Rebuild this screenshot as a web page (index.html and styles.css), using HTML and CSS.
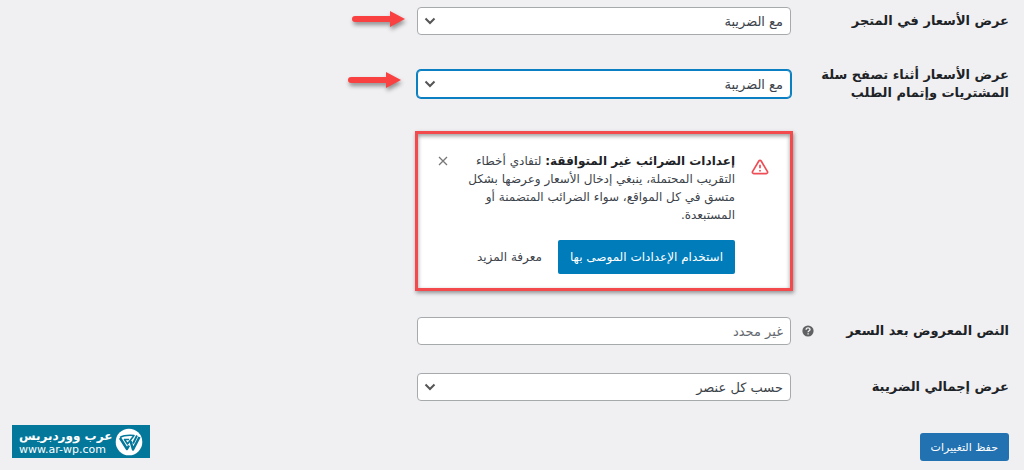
FILE: index.html
```html
<!DOCTYPE html>
<html lang="ar" dir="rtl">
<head>
    <meta charset="UTF-8">
    <meta name="viewport" content="width=device-width, initial-scale=1.0">
    <title>خيارات الضريبة</title>
    <link rel="stylesheet" href="styles.css">
</head>
<body>
    <form class="settings">
        <div class="row">
            <label class="row-label" for="display-shop">عرض الأسعار في المتجر</label>
            <select id="display-shop" class="field select">
                <option>مع الضريبة</option>
                <option>بدون الضريبة</option>
            </select>
            <svg class="arrow" width="56" height="22" viewBox="0 0 56 22" aria-hidden="true">
                <path d="M4 6H39V1L54 9L39 17V12H4A3 3 0 0 1 4 6Z" fill="#f94141"/>
            </svg>
        </div>

        <div class="row row-tall">
            <label class="row-label" for="display-cart">عرض الأسعار أثناء تصفح سلة المشتريات وإتمام الطلب</label>
            <select id="display-cart" class="field select field-focused">
                <option>مع الضريبة</option>
                <option>بدون الضريبة</option>
            </select>
            <svg class="arrow arrow-far" width="56" height="22" viewBox="0 0 56 22" aria-hidden="true">
                <path d="M4 6H39V1L54 9L39 17V12H4A3 3 0 0 1 4 6Z" fill="#f94141"/>
            </svg>
        </div>

        <div class="row">
            <div class="notice">
                <svg class="notice-icon" width="18" height="16" viewBox="0 0 20 18" aria-hidden="true">
                    <path d="M8.700 2.200L1.600 14.200A1.500 1.500 0 0 0 2.900 16.400H17.100A1.500 1.500 0 0 0 18.400 14.200L11.300 2.200A1.500 1.500 0 0 0 8.700 2.200Z" fill="none" stroke="#ee4d56" stroke-width="1.900" stroke-linejoin="round"/>
                    <path d="M10 6.500V10.500M10 12.300V14" stroke="#ee4d56" stroke-width="1.900"/>
                </svg>
                <div class="notice-body">
                    <p class="notice-text"><strong>إعدادات الضرائب غير المتوافقة:</strong> لتفادي أخطاء التقريب المحتملة، ينبغي إدخال الأسعار وعرضها بشكل متسق في كل المواقع، سواء الضرائب المتضمنة أو المستبعدة.</p>
                    <div class="notice-actions">
                        <button type="button" class="button-recommended">استخدام الإعدادات الموصى بها</button>
                        <a class="more" href="#more">معرفة المزيد</a>
                    </div>
                </div>
                <button type="button" class="close" aria-label="إغلاق">
                    <svg width="10" height="10" viewBox="0 0 10 10" aria-hidden="true">
                        <path d="M1 1L9 9M9 1L1 9" stroke="#777" stroke-width="1.300"/>
                    </svg>
                </button>
            </div>
        </div>

        <div class="row">
            <label class="row-label" for="price-suffix">النص المعروض بعد السعر</label>
            <svg class="help" width="12" height="12" viewBox="0 0 12 12" aria-hidden="true">
                <circle cx="6" cy="6" r="5.600" fill="#606163"/>
                <path d="M4.100 4.700C4.100 2.300 8 2.300 8 4.500C8 5.800 6.100 5.700 6.100 7.300M6.100 8.200V9.600" fill="none" stroke="#f0f0f2" stroke-width="1.400"/>
            </svg>
            <input id="price-suffix" class="field" type="text" placeholder="غير محدد">
        </div>

        <div class="row">
            <label class="row-label" for="total-display">عرض إجمالي الضريبة</label>
            <select id="total-display" class="field select">
                <option>حسب كل عنصر</option>
                <option>كإجمالي واحد</option>
            </select>
        </div>

        <button type="submit" class="button-save">حفظ التغييرات</button>
    </form>

    <a class="brand" href="#home">
        <svg width="28" height="28" viewBox="0 0 28 28" aria-hidden="true">
            <circle cx="14" cy="14" r="13.300" fill="#fff"/>
            <g fill="none" stroke="#04789b" stroke-linejoin="round">
                <path d="M5 10L12 21L14 17.500" stroke-width="2.500"/>
                <path d="M5 9.500C9 7 13 7 19 7.500L12.500 16L9.500 11.500H14" stroke-width="1.600"/>
                <path d="M15.500 13L18 21.500L24.500 9" stroke-width="2.500"/>
                <path d="M18 15.500L22 7.500" stroke-width="2"/>
            </g>
        </svg>
        <span class="brand-text">
            <span class="brand-name">عرب ووردبريس</span>
            <span class="brand-url" dir="ltr">www.ar-wp.com</span>
        </span>
    </a>
</body>
</html>
```

FILE: styles.css
```css
* {
    box-sizing: border-box;
}

body {
    margin: 0;
    background-color: #f0f0f2;
    color: #3c434a;
    font-family: "DejaVu Sans", sans-serif;
    font-size: 12px;
}

button,
input,
select {
    font-family: inherit;
    font-size: 12px;
}

.settings {
    display: flex;
    flex-direction: column;
    gap: 28px;
    padding: 7px 15px 8px;
}

.row {
    display: grid;
    grid-template-columns: 195px 23px minmax(0, 374px) 1fr;
    align-items: center;
}

.row-tall {
    min-height: 42px;
}

.row-label {
    grid-column: 1;
    color: #1d2327;
    font-size: 13px;
    font-weight: bold;
    line-height: 18px;
}

.field {
    grid-column: 3;
    grid-row: 1;
    width: 100%;
    height: 28px;
    margin: 0;
    padding: 0 7px;
    border: 1px solid #a7aaad;
    border-radius: 4px;
    background-color: #fff;
    color: #3c434a;
    font-size: 13px;
}

.field::placeholder {
    color: #646970;
    opacity: 1;
}

.select {
    appearance: none;
    padding-left: 24px;
    background-image: url("data:image/svg+xml,%3Csvg xmlns='http://www.w3.org/2000/svg' width='12' height='8' viewBox='0 0 12 8'%3E%3Cpath d='M1.500 1.500L6 6L10.500 1.500' fill='none' stroke='%23555' stroke-width='2'/%3E%3C/svg%3E");
    background-repeat: no-repeat;
    background-position: 6px center;
}

.field-focused {
    border-color: #0a7fc2;
    box-shadow: 0 0 0 1px #0a7fc2;
}

.arrow {
    grid-column: 4;
    grid-row: 1;
    margin-right: 10px;
    filter: drop-shadow(1px 3px 2px rgba(0, 0, 0, 0.4));
}

.arrow-far {
    margin-right: 14px;
    margin-bottom: 4px;
}

.help {
    grid-column: 2;
    grid-row: 1;
}

.notice {
    grid-column: 3;
    display: flex;
    align-items: flex-start;
    margin: -2px;
    padding: 18px 21px 14px 20px;
    border: 3px solid #f34b4d;
    background-color: #fff;
    box-shadow: 1px 2px 4px rgba(0, 0, 0, 0.4), inset 0 2px 4px rgba(0, 0, 0, 0.4);
}

.notice-icon {
    flex: none;
    margin-top: 7px;
}

.notice-body {
    flex: 1;
    margin-right: 16px;
}

.notice-text {
    margin: 0 0 16px;
    line-height: 18px;
}

.notice-text strong {
    color: #1d2327;
}

.notice-actions {
    display: flex;
    align-items: center;
    gap: 16px;
}

.button-recommended {
    height: 34px;
    padding: 0 12px;
    border: 0;
    border-radius: 2px;
    background-color: #007cba;
    color: #fff;
    white-space: nowrap;
    cursor: pointer;
}

.more {
    color: #3c434a;
    text-decoration: none;
    white-space: nowrap;
}

.close {
    display: flex;
    margin-top: 4px;
    padding: 0;
    border: 0;
    background: none;
    cursor: pointer;
}

.button-save {
    align-self: flex-start;
    height: 28px;
    margin-top: 4px;
    padding: 0 11px;
    border: 0;
    border-radius: 3px;
    background-color: #2271b1;
    color: #fff;
    font-size: 11px;
    cursor: pointer;
}

/* site badge over the bottom left corner */
.brand {
    position: absolute;
    bottom: 12px;
    left: 12px;
    display: flex;
    align-items: center;
    gap: 3px;
    height: 33px;
    padding: 0 7px;
    background-color: #04789b;
    color: #fff;
    text-decoration: none;
}

.brand-text {
    display: flex;
    flex-direction: column;
}

.brand-name {
    font-size: 12px;
    font-weight: bold;
    line-height: 16px;
}

.brand-url {
    font-size: 11px;
    line-height: 12px;
}
```
